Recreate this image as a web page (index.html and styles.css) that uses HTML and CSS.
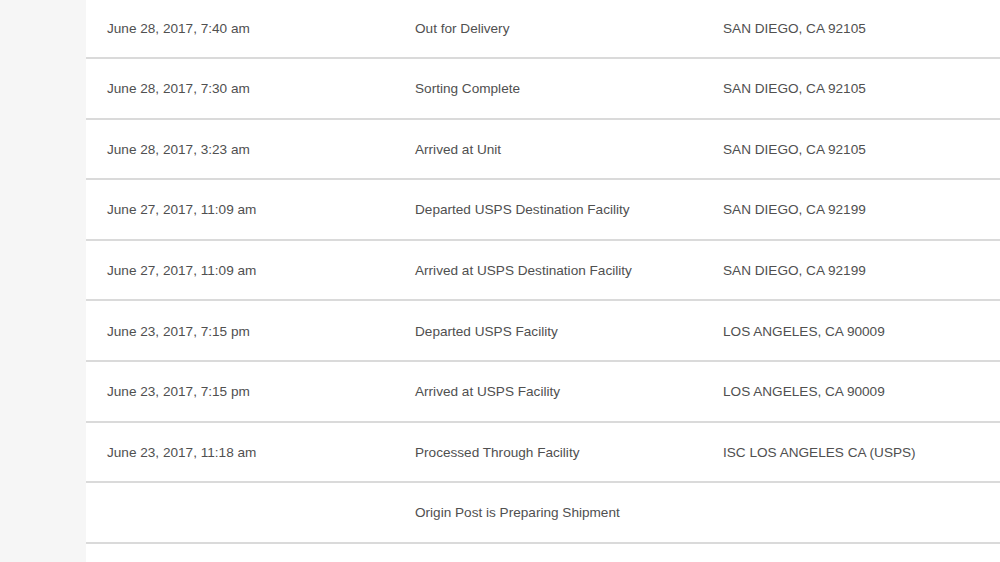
FILE: index.html
```html
<!DOCTYPE html>
<html lang="en">
<head>
    <meta charset="UTF-8">
    <meta name="viewport" content="width=device-width, initial-scale=1.0">
    <title>Tracking History</title>
    <link rel="stylesheet" href="styles.css">
</head>
<body>
    <div class="page">
        <div class="sidebar"></div>
        <div class="history">
            <div class="row"><span>June 28, 2017, 7:40 am</span><span>Out for Delivery</span><span>SAN DIEGO, CA 92105</span></div>
            <div class="row"><span>June 28, 2017, 7:30 am</span><span>Sorting Complete</span><span>SAN DIEGO, CA 92105</span></div>
            <div class="row"><span>June 28, 2017, 3:23 am</span><span>Arrived at Unit</span><span>SAN DIEGO, CA 92105</span></div>
            <div class="row"><span>June 27, 2017, 11:09 am</span><span>Departed USPS Destination Facility</span><span>SAN DIEGO, CA 92199</span></div>
            <div class="row"><span>June 27, 2017, 11:09 am</span><span>Arrived at USPS Destination Facility</span><span>SAN DIEGO, CA 92199</span></div>
            <div class="row"><span>June 23, 2017, 7:15 pm</span><span>Departed USPS Facility</span><span>LOS ANGELES, CA 90009</span></div>
            <div class="row"><span>June 23, 2017, 7:15 pm</span><span>Arrived at USPS Facility</span><span>LOS ANGELES, CA 90009</span></div>
            <div class="row"><span>June 23, 2017, 11:18 am</span><span>Processed Through Facility</span><span>ISC LOS ANGELES CA (USPS)</span></div>
            <div class="row"><span></span><span>Origin Post is Preparing Shipment</span><span></span></div>
        </div>
    </div>
</body>
</html>
```
FILE: styles.css
```css
* {
    margin: 0;
    padding: 0;
    box-sizing: border-box;
}

body {
    background: #fff;
    font-family: 'Liberation Sans', Arial, sans-serif;
    overflow: hidden;
}

.page {
    display: flex;
    height: 562px;
}

.sidebar {
    width: 86px;
    flex-shrink: 0;
    background: #f6f6f6;
}

.history {
    flex: 1;
    margin-top: -1.6px;
}

.row {
    display: grid;
    grid-template-columns: 308px 308px 1fr;
    align-items: center;
    height: 60.6px;
    border-bottom: 2px solid #dadada;
    padding: 1px 0 0 21px;
    color: #505050;
    font-size: 13.6px;
}

.row span {
    white-space: nowrap;
}
```
